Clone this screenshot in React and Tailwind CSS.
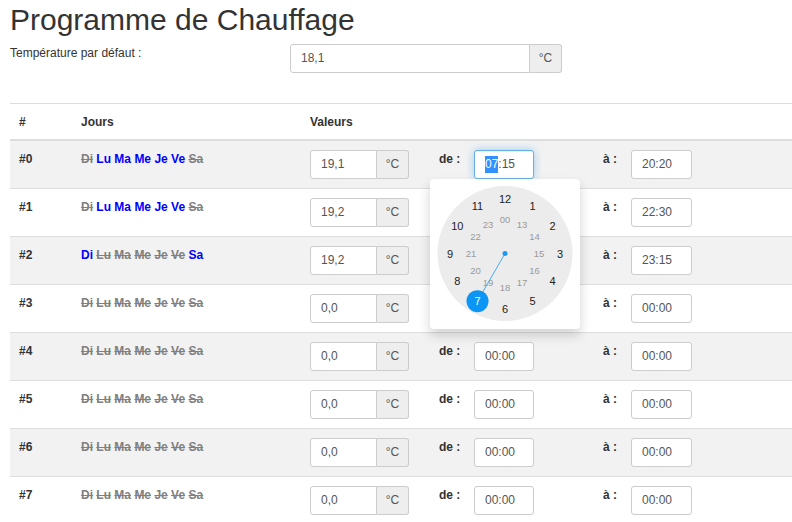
import React from "react";

const DAY_NAMES = ["Di", "Lu", "Ma", "Me", "Je", "Ve", "Sa"];

const rows = [
  { temp: "19,1", days: [0, 1, 1, 1, 1, 1, 0], de: "07:15", a: "20:20" },
  { temp: "19,2", days: [0, 1, 1, 1, 1, 1, 0], de: "07:00", a: "22:30" },
  { temp: "19,2", days: [1, 0, 0, 0, 0, 0, 1], de: "08:00", a: "23:15" },
  { temp: "0,0", days: [0, 0, 0, 0, 0, 0, 0], de: "00:00", a: "00:00" },
  { temp: "0,0", days: [0, 0, 0, 0, 0, 0, 0], de: "00:00", a: "00:00" },
  { temp: "0,0", days: [0, 0, 0, 0, 0, 0, 0], de: "00:00", a: "00:00" },
  { temp: "0,0", days: [0, 0, 0, 0, 0, 0, 0], de: "00:00", a: "00:00" },
  { temp: "0,0", days: [0, 0, 0, 0, 0, 0, 0], de: "00:00", a: "00:00" },
];

function Clock() {
  const cx = 75;
  const cy = 74.5;
  const outer = [12, 1, 2, 3, 4, 5, 6, 7, 8, 9, 10, 11];
  const inner = ["00", "13", "14", "15", "16", "17", "18", "19", "20", "21", "22", "23"];
  const pos = (i, r) => {
    const ang = (i * 30 * Math.PI) / 180;
    return [cx + r * Math.sin(ang), cy - r * Math.cos(ang)];
  };
  const [bx, by] = pos(7, 55);
  return (
    <svg width="150" height="150" viewBox="0 0 150 150">
      <circle cx={cx} cy={cy} r="67.5" fill="#ececec" />
      {inner.map((t, i) => {
        const [x, y] = pos(i, 34);
        return (
          <text key={t} x={x} y={y} textAnchor="middle" dominantBaseline="central" fontSize="9.5" fill="#9a9a9a" fontFamily="Liberation Sans, Arial, sans-serif">
            {t}
          </text>
        );
      })}
      {outer.map((t, i) => {
        if (t === 7) return null;
        const [x, y] = pos(i, 55);
        return (
          <text key={t} x={x} y={y} textAnchor="middle" dominantBaseline="central" fontSize="11" fill="#222" fontFamily="Liberation Sans, Arial, sans-serif">
            {t}
          </text>
        );
      })}
      <line x1={cx} y1={cy} x2={bx} y2={by} stroke="#4aa9f2" strokeWidth="1" />
      <circle cx={cx} cy={cy} r="2.5" fill="#1a9af5" />
      <circle cx={bx} cy={by} r="11" fill="#0b96f5" />
      <text x={bx} y={by} textAnchor="middle" dominantBaseline="central" fontSize="11" fill="#ffffff" fontFamily="Liberation Sans, Arial, sans-serif">
        7
      </text>
    </svg>
  );
}

function TempGroup({ value }) {
  return (
    <div className="flex h-[29px]">
      <div className="w-[67px] h-full border border-[#ccc] rounded-l-[3px] bg-white px-[10px] flex items-center text-[#555]">
        {value}
      </div>
      <div className="w-[32px] h-full border border-l-0 border-[#ccc] rounded-r-[3px] bg-[#eee] flex items-center justify-center text-[#555]">
        °C
      </div>
    </div>
  );
}

function TimeBox({ value, w, focused }) {
  if (focused) {
    return (
      <div
        className={`${w} h-[29px] border border-[#66afe9] rounded-[3px] bg-white px-[10px] flex items-center text-[#555] shadow-[inset_0_1px_1px_rgba(0,0,0,0.075),0_0_8px_rgba(102,175,233,0.6)]`}
      >
        <span className="bg-[#3390ff] text-white">{value.slice(0, 2)}</span>
        <span>{value.slice(2)}</span>
      </div>
    );
  }
  return (
    <div className={`${w} h-[29px] border border-[#ccc] rounded-[3px] bg-white px-[10px] flex items-center text-[#555]`}>
      {value}
    </div>
  );
}

function Row({ idx, row }) {
  const striped = idx % 2 === 0;
  return (
    <div className={`flex h-[48px] border-b border-[#ddd] ${striped ? "bg-[#f2f2f2]" : "bg-white"}`}>
      <div className="w-[63px] shrink-0 pl-[9px] pt-[10px] font-bold text-[#333]">#{idx}</div>
      <div className="w-[229px] shrink-0 pl-[8px] pt-[10px] font-bold">
        {row.days.map((on, i) => (
          <React.Fragment key={i}>
            <span className={on ? "text-[#0000ff]" : "text-[#808080] line-through"}>{DAY_NAMES[i]}</span>
            {i < 6 ? " " : ""}
          </React.Fragment>
        ))}
      </div>
      <div className="flex items-start pt-[9px] pl-[8px]">
        <TempGroup value={row.temp} />
        <div className="ml-[30px] w-[35px] pt-[1px] font-bold text-[#333]">de :</div>
        <div className="relative">
          <TimeBox value={row.de} w="w-[60px]" focused={idx === 0} />
          {idx === 0 && (
            <div className="absolute left-[-44px] top-[29px] z-10 w-[150px] h-[150px] bg-white rounded-[4px] shadow-[0_6px_12px_rgba(0,0,0,0.175)]">
              <Clock />
            </div>
          )}
        </div>
        <div className="ml-[69px] w-[28px] pt-[1px] font-bold text-[#333]">à :</div>
        <TimeBox value={row.a} w="w-[61px]" />
      </div>
    </div>
  );
}

export default function App() {
  return (
    <div
      className="w-[792px] h-[522px] overflow-hidden bg-white pl-[10px] text-[12px] leading-[17px] text-[#333]"
      style={{ fontFamily: '"Liberation Sans", Arial, Helvetica, sans-serif' }}
    >
      <h1 className="pt-[3px] text-[30px] leading-[33px] font-normal text-[#333]">Programme de Chauffage</h1>
      <div className="mt-[8px] flex items-start">
        <div className="w-[280px] mt-[1px]">Température par défaut :</div>
        <div className="flex h-[29px]">
          <div className="w-[240px] h-full border border-[#ccc] rounded-l-[3px] bg-white px-[10px] flex items-center text-[#555]">
            18,1
          </div>
          <div className="w-[32px] h-full border border-l-0 border-[#ccc] rounded-r-[3px] bg-[#eee] flex items-center justify-center text-[#555]">
            °C
          </div>
        </div>
      </div>
      <div className="mt-[30px]">
        <div className="flex h-[38px] items-center pt-[1px] border-t border-b-2 border-[#ddd] font-bold text-[#333]">
          <div className="w-[63px] pl-[9px]">#</div>
          <div className="w-[229px] pl-[8px]">Jours</div>
          <div className="pl-[8px]">Valeurs</div>
        </div>
        {rows.map((r, i) => (
          <Row key={i} idx={i} row={r} />
        ))}
      </div>
    </div>
  );
}
